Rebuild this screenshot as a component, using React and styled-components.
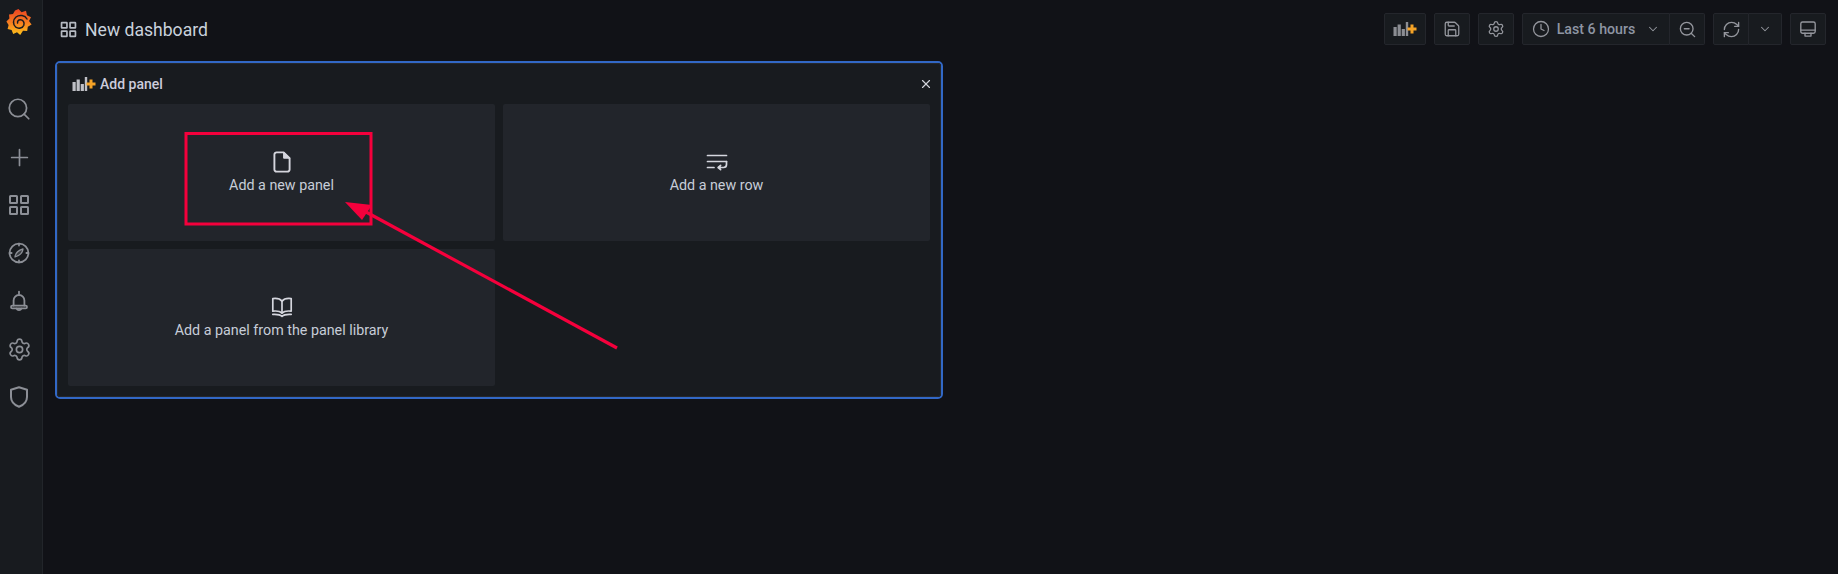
import React from "react";
import styled, { createGlobalStyle } from "styled-components";
import { Search, Plus, Settings, Save, Clock, ChevronDown, ZoomOut, RefreshCw, X } from "lucide-react";

const Global = createGlobalStyle`
  html, body { margin: 0; padding: 0; height: 100%; background: #111217; overflow: hidden; }
  body { font-family: Roboto, "Liberation Sans", sans-serif; color: #ccccdc; }
  #root { height: 100%; }
`;

const Page = styled.div`
  position: relative;
  display: flex;
  width: 1838px;
  height: 574px;
  background: #111217;
`;

const Sidebar = styled.nav`
  width: 42px;
  flex: none;
  background: #181b1f;
  border-right: 1px solid #22252a;
  display: flex;
  flex-direction: column;
  align-items: flex-start;
`;

const LogoBox = styled.div`
  height: 85px;
  padding: 8px 0 0 6px;
  box-sizing: border-box;
`;

const NavItem = styled.div`
  width: 38px;
  height: 48px;
  display: flex;
  align-items: center;
  justify-content: center;
  color: #8c8f96;
`;

const Main = styled.main`
  flex: 1;
  min-width: 0;
  display: flex;
  flex-direction: column;
`;

const TopBar = styled.header`
  height: 32px;
  margin-top: 13px;
  padding: 0 12px 0 17px;
  display: flex;
  align-items: center;
  gap: 8px;
`;

const Title = styled.h1`
  margin: 0 auto 0 0;
  display: flex;
  align-items: center;
  gap: 8px;
  font-size: 17.6px;
  line-height: 24px;
  padding-top: 1px;
  font-weight: 400;
  color: #c9d1dc;
`;

const TitleIcon = styled.span`
  display: flex;
  color: #b6bac2;
`;

const Btn = styled.div`
  height: 32px;
  box-sizing: border-box;
  width: ${(p) => p.$w}px;
  display: flex;
  align-items: center;
  justify-content: center;
  gap: 7px;
  background: #181b1f;
  border: 1px solid #24262c;
  border-radius: 2px;
  color: #94969d;
`;

const Group = styled.div`
  display: flex;
`;

const GroupBtn = styled(Btn)`
  border-radius: ${(p) => (p.$last ? "0 2px 2px 0" : "2px 0 0 2px")};
  ${(p) => (p.$last ? "border-left: 0;" : "")}
`;

const TimeLabel = styled.span`
  font-size: 14.2px;
  font-weight: 500;
  color: #8e95a3;
  margin-right: 4px;
`;

const Panel = styled.section`
  margin: 16px 0 0 12px;
  width: 888px;
  height: 338px;
  box-sizing: border-box;
  border: 2px solid #3268c6;
  border-radius: 5px;
`;

const PanelInner = styled.div`
  height: 100%;
  box-sizing: border-box;
  background: #181b1f;
  border: 1px solid #24272c;
  border-radius: 3px;
  padding: 0 10px;
`;

const PanelHeader = styled.div`
  height: 40px;
  display: flex;
  align-items: center;
  justify-content: space-between;
  padding: 0 0 0 4px;
  font-size: 14px;
  font-weight: 500;
  color: #ccccdc;
`;

const HeaderTitle = styled.div`
  display: flex;
  align-items: center;
  gap: 4px;
`;

const Close = styled.span`
  display: flex;
  color: #d0d2da;
  margin-right: -3px;
`;

const CardGrid = styled.div`
  display: grid;
  grid-template-columns: 427px 427px;
  grid-auto-rows: 137px;
  gap: 8px;
`;

const Card = styled.div`
  background: #22252b;
  border-radius: 2px;
  display: flex;
  flex-direction: column;
  align-items: center;
  justify-content: center;
  font-size: 14.3px;
  line-height: 21px;
  color: #c7cdd8;
  svg { color: #d5d6de; margin-bottom: 1px; }
`;

const Annotation = styled.svg`
  position: absolute;
  left: 0;
  top: 0;
  pointer-events: none;
`;

const GrafanaLogo = () => (
  <svg width="26" height="28" viewBox="0 0 26 28" style={{ display: "block" }}>
    <defs>
      <linearGradient id="gf" x1="0" y1="1" x2="0" y2="0">
        <stop offset="0" stopColor="#fcc21b" />
        <stop offset="0.5" stopColor="#f57a20" />
        <stop offset="1" stopColor="#ec4323" />
      </linearGradient>
    </defs>
    <path
      fill="url(#gf)"
      d="M12.5 1 L15.6 4.2 L20 2.8 L21 7.2 L25 9.2 L23 13 L25.6 16.5 L21.8 18.8 L21.2 23 L17 22.8 L14.2 27 L11 24.2 L7.2 26 L5.6 22 L1.6 21 L2.6 17 L0.4 13.6 L3.4 10.6 L3 6.4 L7 6 L9 2.4 Z"
    />
    <path
      fill="none"
      stroke="#1a1b1f"
      strokeWidth="1.5"
      strokeLinecap="round"
      d="M21 11 C19 7.2 13.5 6.2 10 9 C6.6 11.8 6.8 17 9.8 19.2 C12.6 21 16.6 20.2 17.8 17.2 C18.8 14.4 17 11.8 14.2 11.8 C12.4 11.8 11.2 13.2 11.6 15"
    />
  </svg>
);

const Svg = ({ size = 24, w, h, vb = "0 0 24 24", sw = 1.8, children }) => (
  <svg
    width={w ?? size}
    height={h ?? size}
    viewBox={vb}
    fill="none"
    stroke="currentColor"
    strokeWidth={sw}
    strokeLinecap="round"
    strokeLinejoin="round"
  >
    {children}
  </svg>
);

const GridIcon = ({ size = 22, sw = 2 }) => (
  <svg width={size} height={size} viewBox="0 0 22 22" fill="none" stroke="currentColor" strokeWidth={sw}>
    <rect x="2" y="2" width="7" height="7" rx="0.5" />
    <rect x="13" y="2" width="7" height="7" rx="0.5" />
    <rect x="2" y="13" width="7" height="7" rx="0.5" />
    <rect x="13" y="13" width="7" height="7" rx="0.5" />
  </svg>
);

const CompassIcon = () => (
  <Svg>
    <circle cx="12" cy="12" r="9.4" />
    <path d="M12 2.6v2M12 19.4v2M2.6 12h2M19.4 12h2" />
    <path d="M16 8 C15.6 11.8 13 14.4 8 16 C8.4 12 11 9.4 16 8Z" fill="currentColor" fillOpacity="0.3" strokeWidth="1.3" />
  </Svg>
);

const BellIcon = () => (
  <Svg>
    <path d="M12 2.6v1.8M6.6 16.6v-5.2a5.4 5.4 0 0 1 10.8 0v5.2" />
    <rect x="4" y="16.6" width="16" height="2.8" rx="1.4" />
    <path d="M9.6 19.6a2.6 2.6 0 0 0 4.8 0" />
  </Svg>
);

const ShieldIcon = () => (
  <Svg sw={2}>
    <path d="M12 2.2 L20 4.8 V12 C20 16.6 16.6 20 12 21.8 C7.4 20 4 16.6 4 12 V4.8 Z" />
  </Svg>
);

const FileIcon = () => (
  <Svg sw={1.9} size={24}>
    <path d="M13.6 2.4H6.6A2.2 2.2 0 0 0 4.4 4.6v14.8a2.2 2.2 0 0 0 2.2 2.2h10.8a2.2 2.2 0 0 0 2.2-2.2V8.2Z" />
    <path d="M13.6 2.4v5.8h5.8Z" fill="currentColor" strokeWidth="1" />
  </Svg>
);

const RowIcon = () => (
  <Svg w={22} h={24} vb="0 0 22 24" sw={1.7}>
    <path d="M1.5 5.5h19M1.5 11.5h19M1.5 17.5h6.5" />
    <path d="M20.5 11.5v3a3 3 0 0 1-3 3h-5" />
    <path d="M14.6 15.4 12.2 17.5l2.4 2.1" fill="currentColor" />
  </Svg>
);

const BookIcon = () => (
  <Svg w={22} h={24} vb="0 0 22 24" sw={1.7}>
    <path d="M11 6.2 C9 3.6 5 3.2 1.8 3.6 V16.2 C5 15.8 9 16.2 11 18 C13 16.2 17 15.8 20.2 16.2 V3.6 C17 3.2 13 3.6 11 6.2Z" />
    <path d="M11 6.2V18" />
    <path d="M1.8 19.4 C5 19.2 9 19.4 11 21.4 C13 19.4 17 19.2 20.2 19.4" />
  </Svg>
);

const MonitorIcon = () => (
  <Svg size={18} sw={1.8}>
    <rect x="2.4" y="2.6" width="19.2" height="15" rx="2.4" />
    <path d="M2.4 13.4h19.2M8 17.6v3.8h8v-3.8" />
  </Svg>
);

const AddPanelIcon = ({ bar }) => (
  <svg width="24" height="16" viewBox="0 0 24 16">
    <g fill={bar}>
      <rect x="0.5" y="6" width="3.2" height="9" />
      <rect x="4.6" y="3.5" width="3.2" height="11.5" />
      <rect x="8.7" y="8" width="3.2" height="7" />
      <rect x="12.8" y="1" width="2.4" height="14" />
    </g>
    <path d="M19 3.6v9M14.5 8.1h9" stroke="#f5a327" strokeWidth="3" />
  </svg>
);

const navIcons = [
  <Search size={26} strokeWidth={1.6} />,
  <Plus size={27} strokeWidth={1.5} />,
  <GridIcon />,
  <CompassIcon />,
  <BellIcon />,
  <Settings size={25} strokeWidth={1.6} />,
  <ShieldIcon />,
];

export default function App() {
  return (
    <Page>
      <Global />
      <Sidebar>
        <LogoBox>
          <GrafanaLogo />
        </LogoBox>
        {navIcons.map((icon, i) => (
          <NavItem key={i}>{icon}</NavItem>
        ))}
      </Sidebar>
      <Main>
        <TopBar>
          <Title>
            <TitleIcon>
              <GridIcon size={17} sw={2.2} />
            </TitleIcon>
            New dashboard
          </Title>
          <Btn $w={42}><AddPanelIcon bar="#8b8d93" /></Btn>
          <Btn $w={36}><Save size={18} strokeWidth={1.7} /></Btn>
          <Btn $w={36}><Settings size={18} strokeWidth={1.7} /></Btn>
          <Group>
            <GroupBtn $w={148}>
              <Clock size={18} strokeWidth={1.7} />
              <TimeLabel>Last 6 hours</TimeLabel>
              <ChevronDown size={14} strokeWidth={1.8} />
            </GroupBtn>
            <GroupBtn $w={35} $last><ZoomOut size={19} strokeWidth={1.7} /></GroupBtn>
          </Group>
          <Group>
            <GroupBtn $w={36}><RefreshCw size={19} strokeWidth={1.7} /></GroupBtn>
            <GroupBtn $w={33} $last><ChevronDown size={14} strokeWidth={1.8} /></GroupBtn>
          </Group>
          <Btn $w={36}><MonitorIcon /></Btn>
        </TopBar>
        <Panel>
          <PanelInner>
            <PanelHeader>
              <HeaderTitle>
                <AddPanelIcon bar="#bfc0c6" />
                Add panel
              </HeaderTitle>
              <Close><X size={14} strokeWidth={2} /></Close>
            </PanelHeader>
            <CardGrid>
              <Card><FileIcon />Add a new panel</Card>
              <Card><RowIcon />Add a new row</Card>
              <Card><BookIcon />Add a panel from the panel library</Card>
            </CardGrid>
          </PanelInner>
        </Panel>
      </Main>
      <Annotation width="1838" height="574" viewBox="0 0 1838 574">
        <rect x="186" y="133.5" width="185" height="90.5" fill="none" stroke="#f5003c" strokeWidth="3" />
        <path d="M617 348 L366 212" stroke="#f5003c" strokeWidth="3.2" fill="none" />
        <path d="M345 202 L372 205 L362 220 Z" fill="#f5003c" />
      </Annotation>
    </Page>
  );
}
